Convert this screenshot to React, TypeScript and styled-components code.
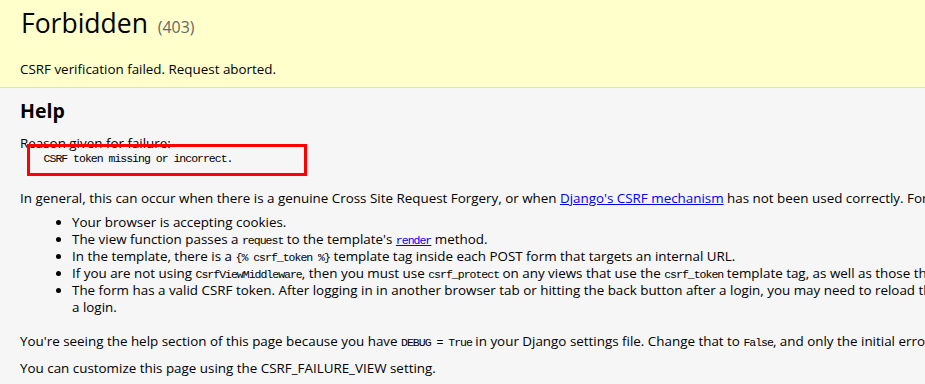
import React from 'react'
import styled, { createGlobalStyle } from 'styled-components'

const GlobalStyle = createGlobalStyle`
html, body {
 margin: 0;
 padding: 0;
 overflow: hidden;
}
body {
 background: #eee;
 color: #000;
 font-family: "Open Sans", "Noto Sans", sans-serif;
 font-size: 13.4px;
 line-height: 17px;
}
`

const Page = styled.div`
position: relative;
width: 1400px;
`

const Summary = styled.div`
background: #ffc;
border-bottom: 1px solid #ddd;
padding: 10px 20px 9px;
`

const Title = styled.h1`
margin: 0 0 20px;
padding-left: 1px;
font-size: 26.5px;
line-height: 27px;
font-weight: normal;
`

const Status = styled.span`
margin-left: 3px;
font-size: 60%;
color: #666;
`

const Info = styled.div`
background: #f6f6f6;
padding: 10px 20px;
min-height: 400px;
`

const HelpTitle = styled.h2`
margin: 0;
font-size: 19.5px;
line-height: 26px;
font-weight: bold;
`

const Paragraph = styled.p<{ $gap?: number }>`
margin: 0;
padding-top: ${p => p.$gap ?? 10}px;
white-space: nowrap;
`

const Pre = styled.pre`
margin: 0;
font-family: "Liberation Mono", monospace;
font-size: 11.5px;
letter-spacing: -1px;
line-height: 14px;
`

const Code = styled.code`
font-family: "Liberation Mono", monospace;
font-size: 11.5px;
letter-spacing: -1px;
line-height: 1;
`

const Link = styled.a`
color: #00e;
text-decoration: underline;
`

const List = styled.ul`
margin: 7px 52px;
padding: 0;
list-style: disc;
`

const Item = styled.li`
white-space: nowrap;
`

const Annotation = styled.div`
position: absolute;
left: 27px;
top: 144px;
width: 274px;
height: 26px;
border: 3px solid #f00;
pointer-events: none;
`

export default function App() {
 return (
  <>
   <GlobalStyle />
   <Page>
    <Summary>
     <Title>Forbidden <Status>(403)</Status></Title>
     <Paragraph $gap={0}>CSRF verification failed. Request aborted.</Paragraph>
    </Summary>
    <Info>
     <HelpTitle>Help</HelpTitle>
     <Paragraph $gap={11}>Reason given for failure:</Paragraph>
     <Pre>{'    CSRF token missing or incorrect.\n    '}</Pre>
     <Paragraph>
      In general, this can occur when there is a genuine Cross Site Request Forgery, or when{' '}
      <Link href="#">Django's CSRF mechanism</Link> has not been used correctly. For POST forms, you need to ensure:
     </Paragraph>
     <List>
      <Item>Your browser is accepting cookies.</Item>
      <Item>The view function passes a <Code>request</Code> to the template's <Link href="#"><Code>render</Code></Link> method.</Item>
      <Item>In the template, there is a <Code>{'{% csrf_token %}'}</Code> template tag inside each POST form that targets an internal URL.</Item>
      <Item>If you are not using <Code>CsrfViewMiddleware</Code>, then you must use <Code>csrf_protect</Code> on any views that use the <Code>csrf_token</Code> template tag, as well as those that accept the POST data.</Item>
      <Item>
       The form has a valid CSRF token. After logging in in another browser tab or hitting the back button after a login, you may need to reload the page with the form, because the token is rotated after<br />a login.
      </Item>
     </List>
     <Paragraph>
      You're seeing the help section of this page because you have <Code>DEBUG = True</Code> in your Django settings file. Change that to <Code>False</Code>, and only the initial error message will be displayed.
     </Paragraph>
     <Paragraph>You can customize this page using the CSRF_FAILURE_VIEW setting.</Paragraph>
    </Info>
    <Annotation />
   </Page>
  </>
 )
}
